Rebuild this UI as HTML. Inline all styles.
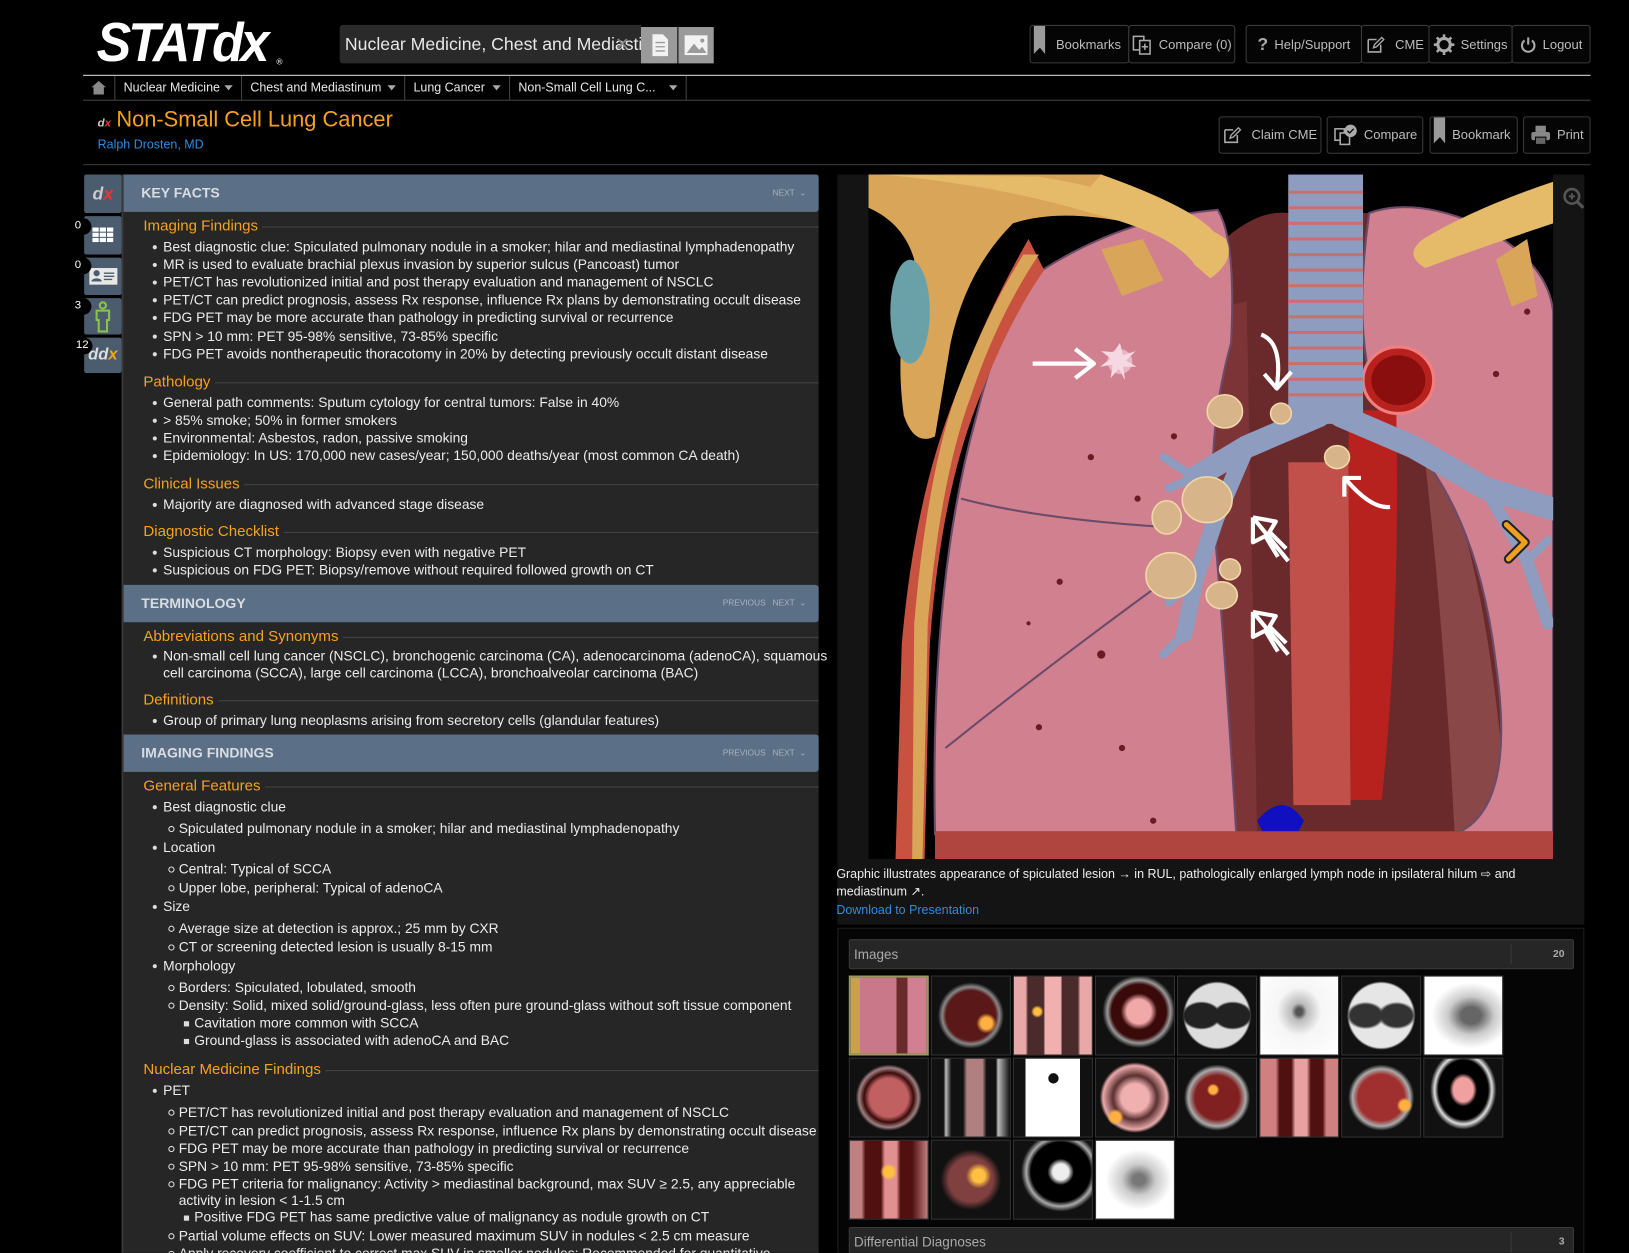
<!DOCTYPE html>
<html><head><meta charset="utf-8"><style>
html,body{margin:0;padding:0;background:#000;width:1629px;height:1253px;overflow:hidden}
#w{position:absolute;left:0;top:0;width:1568px;height:1206px;transform:scale(1.03890);transform-origin:0 0;font-family:"Liberation Sans",Arial,sans-serif;color:#e6e6e6;overflow:hidden}
.a{position:absolute}
.btn{position:absolute;border:1px solid #3a3a3a;border-radius:3px;background:#050505;color:#bdbdbd;font-size:12.5px;display:flex;align-items:center;justify-content:center;gap:6px;box-sizing:border-box}
.bc{position:absolute;top:73px;height:23px;border-right:1px solid #444;color:#e8e8e8;font-size:12px;line-height:23px;padding-left:8px;box-sizing:border-box;font-family:"Liberation Sans Narrow","Liberation Sans",sans-serif}
.bc:after{content:"";position:absolute;right:8px;top:9px;border:4px solid transparent;border-top:5px solid #aaa}
.l{position:absolute;font-size:13.3px;line-height:16px;white-space:nowrap;color:#ececec}
.h{position:absolute;left:120px;width:668px;font-size:14.5px;line-height:18px;color:#f7a21b}
.h span{background:#262626;padding:0 4px 0 18px;position:relative}
.h:before{content:"";position:absolute;left:0;right:0;top:9px;border-top:1px solid #444}
.sh{position:absolute;left:119px;width:669px;height:36px;background:#5b6f86;border-radius:0 3px 3px 0;color:#d9dde2;font-weight:bold;font-size:13.5px;line-height:36px;box-sizing:border-box;padding-left:17px}
.sh i{position:absolute;right:12px;top:0;font-style:normal;font-weight:normal;font-size:8px;color:#a7b4c2}
.b1:before{content:"";position:absolute;left:-10px;top:6px;width:4px;height:4px;border-radius:50%;background:#ddd}
.b2:before{content:"";position:absolute;left:-10px;top:5px;width:4px;height:4px;border-radius:50%;border:1px solid #ddd}
.b3:before{content:"";position:absolute;left:-10px;top:6px;width:5px;height:5px;background:#ddd}
.side{position:absolute;left:81px;width:36px;background:#4b5c6e;border-radius:2px}
.num{position:absolute;left:72px;width:16px;height:16px;border-radius:8px;background:#000;color:#fff;font-size:11px;line-height:14px}
.th{position:absolute;width:77px;height:77px;border:1px solid #333;box-sizing:border-box}
</style></head><body><div id="w">

<div class="a" style="left:93px;top:12px;font-size:50px;font-weight:bold;font-style:italic;color:#fff;letter-spacing:-3px;font-family:'Liberation Sans',sans-serif;transform:scaleY(1.05)">STATd<span style="letter-spacing:0">x</span></div>
<div class="a" style="left:266px;top:55px;font-size:8px;color:#fff">®</div>

<div class="a" style="left:327px;top:24px;width:290px;height:37px;background:#2a2a2a;border-radius:3px 0 0 3px;font-size:17px;line-height:37px;color:#e8e8e8;padding-left:5px;box-sizing:border-box;overflow:hidden;white-space:nowrap;font-family:'Liberation Sans Narrow','Liberation Sans',sans-serif">Nuclear Medicine, Chest and Mediasti<span style="position:absolute;left:265px;color:#888">✕</span></div>
<div class="a" style="left:617px;top:26px;width:35px;height:35px;background:#9a9a9a"><svg width="35" height="35"><path d="M11 7h10l5 5v16H11z" fill="#f2f2f2"/><path d="M14 15h9M14 19h9M14 23h9" stroke="#999" stroke-width="1.3"/></svg></div>
<div class="a" style="left:653px;top:26px;width:34px;height:35px;background:#9a9a9a"><svg width="34" height="35"><rect x="6" y="8" width="22" height="19" fill="#f2f2f2"/><path d="M8 25l7-9 5 6 3-3 4 6z" fill="#9a9a9a"/><circle cx="23" cy="13" r="2" fill="#9a9a9a"/></svg></div>

<div class="btn" style="left:991px;top:24px;width:96px;height:37px;justify-content:flex-end;padding-right:7px"><svg class="a" style="left:3px;top:0" width="12" height="28"><path d="M0 0h11v27l-5-6-6 6z" fill="#9a9a9a"/></svg>Bookmarks</div>
<div class="btn" style="left:1086px;top:24px;width:103px;height:37px"><svg width="20" height="20"><rect x="2" y="2" width="10" height="13" fill="none" stroke="#aaa" stroke-width="1.5"/><rect x="8" y="6" width="10" height="13" fill="#050505" stroke="#aaa" stroke-width="1.5"/><path d="M10 12h6M13 9v6" stroke="#aaa" stroke-width="1.5"/></svg>Compare (0)</div>
<div class="btn" style="left:1199px;top:24px;width:112px;height:37px"><b style="font-size:17px;color:#aaa">?</b>Help/Support</div>
<div class="btn" style="left:1310px;top:24px;width:66px;height:37px"><svg width="18" height="18"><path d="M2 4h8M2 4v12h12V9" fill="none" stroke="#aaa" stroke-width="1.5"/><path d="M7 12l1-3 7-7 2 2-7 7z" fill="none" stroke="#aaa" stroke-width="1.3"/></svg>&nbsp;CME</div>
<div class="btn" style="left:1375px;top:24px;width:81px;height:37px"><svg width="20" height="20"><circle cx="10" cy="10" r="6" fill="none" stroke="#aaa" stroke-width="3"/><path d="M10 0v5M10 15v5M0 10h5M15 10h5M3 3l3 3M14 14l3 3M17 3l-3 3M3 17l3-3" stroke="#aaa" stroke-width="2.5"/></svg>Settings</div>
<div class="btn" style="left:1455px;top:24px;width:76px;height:37px"><svg width="16" height="16"><path d="M4.5 4a6 6 0 1 0 7 0" fill="none" stroke="#aaa" stroke-width="2"/><path d="M8 1v7" stroke="#aaa" stroke-width="2"/></svg>Logout</div>

<div class="a" style="left:80px;top:72px;width:1451px;height:1px;background:#ddd"></div>
<div class="a" style="left:80px;top:73px;width:1451px;height:23px;border-bottom:1px solid #444"></div>
<div class="a" style="left:80px;top:73px;width:31px;height:23px;border-right:1px solid #444;box-sizing:border-box"><svg width="30" height="23"><path d="M8 11l7-6 7 6h-2v7h-10v-7z" fill="#888"/></svg></div>
<div class="bc" style="left:111px;width:122px">Nuclear Medicine</div>
<div class="bc" style="left:233px;width:157px">Chest and Mediastinum</div>
<div class="bc" style="left:390px;width:101px">Lung Cancer</div>
<div class="bc" style="left:491px;width:170px">Non-Small Cell Lung C...</div>

<div class="a" style="left:94px;top:113px;font-size:11px;font-style:italic;font-weight:bold;color:#ccc">d<span style="color:#e33">x</span></div>
<div class="a" style="left:112px;top:104px;font-size:21px;color:#f7a21b;font-family:'Liberation Sans Narrow','Liberation Sans',sans-serif">Non-Small Cell Lung Cancer</div>
<div class="a" style="left:94px;top:132px;font-size:12px;color:#2f8be0">Ralph Drosten, MD</div>

<div class="btn" style="left:1173px;top:112px;width:99px;height:36px"><svg width="18" height="18"><path d="M2 4h8M2 4v12h12V9" fill="none" stroke="#aaa" stroke-width="1.5"/><path d="M7 12l1-3 7-7 2 2-7 7z" fill="none" stroke="#aaa" stroke-width="1.3"/></svg>&nbsp;Claim CME</div>
<div class="btn" style="left:1277px;top:112px;width:93px;height:36px"><svg width="24" height="22"><rect x="2" y="5" width="9" height="11" fill="none" stroke="#aaa" stroke-width="1.5"/><rect x="7" y="9" width="9" height="11" fill="#050505" stroke="#aaa" stroke-width="1.5"/><circle cx="17" cy="7" r="6" fill="#aaa"/><path d="M14 7l2 2 4-4" stroke="#050505" stroke-width="1.3" fill="none"/></svg>Compare</div>
<div class="btn" style="left:1376px;top:112px;width:85px;height:36px;justify-content:flex-end;padding-right:6px"><svg class="a" style="left:3px;top:0" width="12" height="26"><path d="M0 0h11v25l-5-6-6 6z" fill="#9a9a9a"/></svg>Bookmark</div>
<div class="btn" style="left:1466px;top:112px;width:65px;height:36px"><svg width="20" height="20"><rect x="5" y="1" width="10" height="6" fill="#888"/><rect x="1" y="7" width="18" height="8" rx="2" fill="#888"/><rect x="5" y="12" width="10" height="7" fill="#666" stroke="#050505"/></svg>Print</div>
<div class="a" style="left:80px;top:158px;width:1451px;height:1px;background:#3a3a3a"></div>

<div class="a" style="left:117px;top:168px;width:2px;height:1040px;background:#3a3a3a"></div>
<div class="side" style="top:168px;height:37px;font-size:17px;font-style:italic;font-weight:bold;color:#ccc;text-align:center;line-height:37px">d<span style="color:#e33">x</span></div>
<div class="side" style="top:208px;height:37px"><svg width="36" height="37"><g fill="#fff"><rect x="8" y="11" width="6" height="4"/><rect x="15" y="11" width="6" height="4"/><rect x="22" y="11" width="6" height="4"/><rect x="8" y="16" width="6" height="4"/><rect x="15" y="16" width="6" height="4"/><rect x="22" y="16" width="6" height="4"/><rect x="8" y="21" width="6" height="4"/><rect x="15" y="21" width="6" height="4"/><rect x="22" y="21" width="6" height="4"/></g></svg></div>
<div class="side" style="top:248px;height:36px"><svg width="36" height="36"><rect x="5" y="10" width="27" height="16" fill="#e8e8e8"/><circle cx="12" cy="15" r="3" fill="#4b5c6e"/><path d="M7 23c0-4 10-4 10 0z" fill="#4b5c6e"/><path d="M19 15h10M19 18h10M19 21h8" stroke="#4b5c6e" stroke-width="1.3"/></svg></div>
<div class="side" style="top:287px;height:35px"><svg width="36" height="35"><circle cx="18" cy="7" r="3" fill="none" stroke="#8bc34a" stroke-width="2"/><path d="M12 12h12v9h-2v11h-8V21h-2z" fill="none" stroke="#8bc34a" stroke-width="2"/></svg></div>
<div class="side" style="top:325px;height:34px;font-size:16px;font-style:italic;font-weight:bold;color:#ddd;text-align:center;line-height:34px">dd<span style="color:#f7a21b">x</span></div>
<div class="num" style="top:210px">0</div><div class="num" style="top:248px">0</div><div class="num" style="top:287px">3</div><div class="num" style="top:325px;left:73px">12</div>

<div class="a" style="left:119px;top:168px;width:669px;height:1040px;background:#262626"></div>
<div class="sh" style="top:168px">KEY FACTS<i>NEXT &nbsp;⌄</i></div>
<div class="h" style="top:209px"><span>Imaging Findings</span></div>
<div class="l b1" style="left:157px;top:230px">Best diagnostic clue: Spiculated pulmonary nodule in a smoker; hilar and mediastinal lymphadenopathy</div>
<div class="l b1" style="left:157px;top:247px">MR is used to evaluate brachial plexus invasion by superior sulcus (Pancoast) tumor</div>
<div class="l b1" style="left:157px;top:264px">PET/CT has revolutionized initial and post therapy evaluation and management of NSCLC</div>
<div class="l b1" style="left:157px;top:281px">PET/CT can predict prognosis, assess Rx response, influence Rx plans by demonstrating occult disease</div>
<div class="l b1" style="left:157px;top:298px">FDG PET may be more accurate than pathology in predicting survival or recurrence</div>
<div class="l b1" style="left:157px;top:316px">SPN &gt; 10 mm: PET 95-98% sensitive, 73-85% specific</div>
<div class="l b1" style="left:157px;top:333px">FDG PET avoids nontherapeutic thoracotomy in 20% by detecting previously occult distant disease</div>
<div class="h" style="top:359px"><span>Pathology</span></div>
<div class="l b1" style="left:157px;top:380px">General path comments: Sputum cytology for central tumors: False in 40%</div>
<div class="l b1" style="left:157px;top:397px">&gt; 85% smoke; 50% in former smokers</div>
<div class="l b1" style="left:157px;top:414px">Environmental: Asbestos, radon, passive smoking</div>
<div class="l b1" style="left:157px;top:431px">Epidemiology: In US: 170,000 new cases/year; 150,000 deaths/year (most common CA death)</div>
<div class="h" style="top:457px"><span>Clinical Issues</span></div>
<div class="l b1" style="left:157px;top:478px">Majority are diagnosed with advanced stage disease</div>
<div class="h" style="top:503px"><span>Diagnostic Checklist</span></div>
<div class="l b1" style="left:157px;top:524px">Suspicious CT morphology: Biopsy even with negative PET</div>
<div class="l b1" style="left:157px;top:541px">Suspicious on FDG PET: Biopsy/remove without required followed growth on CT</div>

<div class="sh" style="top:563px">TERMINOLOGY<i>PREVIOUS &nbsp; NEXT &nbsp;⌄</i></div>
<div class="h" style="top:604px"><span>Abbreviations and Synonyms</span></div>
<div class="l b1" style="left:157px;top:624px">Non-small cell lung cancer (NSCLC), bronchogenic carcinoma (CA), adenocarcinoma (adenoCA), squamous</div>
<div class="l" style="left:157px;top:640px">cell carcinoma (SCCA), large cell carcinoma (LCCA), bronchoalveolar carcinoma (BAC)</div>
<div class="h" style="top:665px"><span>Definitions</span></div>
<div class="l b1" style="left:157px;top:686px">Group of primary lung neoplasms arising from secretory cells (glandular features)</div>

<div class="sh" style="top:707px">IMAGING FINDINGS<i>PREVIOUS &nbsp; NEXT &nbsp;⌄</i></div>
<div class="h" style="top:748px"><span>General Features</span></div>
<div class="l b1" style="left:157px;top:769px">Best diagnostic clue</div>
<div class="l b2" style="left:172px;top:790px">Spiculated pulmonary nodule in a smoker; hilar and mediastinal lymphadenopathy</div>
<div class="l b1" style="left:157px;top:808px">Location</div>
<div class="l b2" style="left:172px;top:829px">Central: Typical of SCCA</div>
<div class="l b2" style="left:172px;top:847px">Upper lobe, peripheral: Typical of adenoCA</div>
<div class="l b1" style="left:157px;top:865px">Size</div>
<div class="l b2" style="left:172px;top:886px">Average size at detection is approx.; 25 mm by CXR</div>
<div class="l b2" style="left:172px;top:904px">CT or screening detected lesion is usually 8-15 mm</div>
<div class="l b1" style="left:157px;top:922px">Morphology</div>
<div class="l b2" style="left:172px;top:943px">Borders: Spiculated, lobulated, smooth</div>
<div class="l b2" style="left:172px;top:960px">Density: Solid, mixed solid/ground-glass, less often pure ground-glass without soft tissue component</div>
<div class="l b3" style="left:187px;top:977px">Cavitation more common with SCCA</div>
<div class="l b3" style="left:187px;top:994px">Ground-glass is associated with adenoCA and BAC</div>
<div class="h" style="top:1021px"><span>Nuclear Medicine Findings</span></div>
<div class="l b1" style="left:157px;top:1042px">PET</div>
<div class="l b2" style="left:172px;top:1063px">PET/CT has revolutionized initial and post therapy evaluation and management of NSCLC</div>
<div class="l b2" style="left:172px;top:1081px">PET/CT can predict prognosis, assess Rx response, influence Rx plans by demonstrating occult disease</div>
<div class="l b2" style="left:172px;top:1098px">FDG PET may be more accurate than pathology in predicting survival or recurrence</div>
<div class="l b2" style="left:172px;top:1115px">SPN &gt; 10 mm: PET 95-98% sensitive, 73-85% specific</div>
<div class="l b2" style="left:172px;top:1132px">FDG PET criteria for malignancy: Activity &gt; mediastinal background, max SUV ≥ 2.5, any appreciable</div>
<div class="l" style="left:172px;top:1148px">activity in lesion &lt; 1-1.5 cm</div>
<div class="l b3" style="left:187px;top:1164px">Positive FDG PET has same predictive value of malignancy as nodule growth on CT</div>
<div class="l b2" style="left:172px;top:1182px">Partial volume effects on SUV: Lower measured maximum SUV in nodules &lt; 2.5 cm measure</div>
<div class="l b2" style="left:172px;top:1199px">Apply recovery coefficient to correct max SUV in smaller nodules; Recommended for quantitative</div>

<div class="a" style="left:806px;top:168px;width:719px;height:722px;background:#141414"></div>
<svg class="a" style="left:836px;top:168px" width="659" height="659" viewBox="836 168 659 659" preserveAspectRatio="none">
<rect x="836" y="168" width="659" height="659" fill="#000"/>
<path d="M1150 260 Q1200 200 1240 205 L1320 205 Q1380 210 1400 280 L1460 800 L1160 800 Z" fill="#6a2a2c"/>
<path d="M1160 300 L1200 290 L1210 800 L1160 800Z" fill="#7c3437"/>
<path d="M1369 420 Q1430 500 1452 800 L1400 800 Q1390 600 1369 420Z" fill="#8a4748"/>
<path d="M1000 262 Q1080 210 1172 202 Q1190 230 1185 330 Q1160 420 1170 520 Q1180 640 1190 803 L900 803 Q895 560 940 400 Q965 300 1000 262Z" fill="#d0808f" stroke="#6b4a6a" stroke-width="2"/>
<path d="M910 720 Q1010 640 1120 560" fill="none" stroke="#6b4a6a" stroke-width="2"/>
<path d="M925 480 Q1000 500 1132 508" fill="none" stroke="#6b4a6a" stroke-width="2"/>
<path d="M1318 205 Q1360 190 1420 215 Q1490 250 1495 300 L1495 803 L1400 803 Q1460 780 1440 640 Q1420 470 1330 400 Q1300 330 1318 205Z" fill="#d0808f" stroke="#6b4a6a" stroke-width="2"/>
<path d="M990 230 Q950 300 920 380 Q880 480 868 620 L862 827 L890 827 L895 620 Q905 480 940 390 Q970 310 1005 260Z" fill="#c8523f"/>
<path d="M1000 245 Q960 305 935 380 Q905 460 893 600 L888 827 L878 827 L880 600 Q892 460 920 380 Q950 300 985 245Z" fill="#d9a558"/>
<path d="M836 168 L1060 168 Q1120 195 1120 215 L1090 215 Q1020 200 975 215 Q930 260 915 330 L900 420 Q880 430 870 400 Q860 330 880 250 Q870 215 836 200Z" fill="#d9a558"/>
<path d="M848 168 Q960 178 1050 205 Q1130 225 1150 255 L1165 268 Q1190 250 1180 230 Q1120 190 1000 170Z" fill="#e5bb6a"/>
<path d="M1495 175 Q1420 200 1370 230 Q1350 245 1372 258 Q1420 240 1495 215Z" fill="#e5bb6a"/>
<path d="M1440 250 L1470 230 L1480 285 L1455 295Z" fill="#d9a558"/>
<path d="M1060 240 L1100 230 L1120 270 L1080 285Z" fill="#d9a558"/>
<ellipse cx="876" cy="300" rx="19" ry="50" fill="#6aa0a8"/>
<path d="M1240 445 L1298 445 L1300 775 L1245 775Z" fill="#c2504a"/>
<path d="M1298 395 L1344 395 Q1348 600 1330 770 L1300 770Z" fill="#b8221e"/>
<ellipse cx="1346" cy="366" rx="34" ry="32" fill="#b8221e" stroke="#f08080" stroke-width="3"/>
<ellipse cx="1346" cy="366" rx="26" ry="24" fill="#8a0e0e"/>
<path d="M900 800 L1495 800 L1495 827 L900 827Z" fill="#b0453f"/>
<path d="M1210 790 Q1235 760 1255 790 L1250 800 L1215 800Z" fill="#1010c0"/>
<rect x="1240" y="168" width="72" height="240" fill="#8e9cc0"/>
<g stroke="#c87070" stroke-width="3">
<path d="M1240 185h72M1240 200h72M1240 215h72M1240 230h72M1240 245h72M1240 260h72M1240 275h72M1240 290h72M1240 305h72M1240 320h72M1240 335h72M1240 350h72M1240 365h72M1240 380h72"/></g>
<path d="M1060 168 Q1150 200 1170 225 L1150 240 Q1120 215 1040 190Z" fill="#e5bb6a"/>
<g stroke="#8e9cc0" stroke-linecap="round" fill="none">
<path d="M1270 400 L1200 430 L1150 460" stroke-width="22"/>
<path d="M1200 430 L1170 500 L1150 560 L1140 610" stroke-width="16"/>
<path d="M1290 400 L1360 430 L1430 470 L1495 490" stroke-width="22"/>
<path d="M1430 470 L1470 540 L1490 600" stroke-width="12"/>
<path d="M1150 460 L1120 440M1150 460 L1125 470M1150 560 L1120 540M1140 610 L1120 630M1150 560 L1125 580M1470 540 L1490 520" stroke-width="8"/>
</g>
<g fill="#d8b48a" stroke="#f0d8a8" stroke-width="1.5">
<ellipse cx="1179" cy="396" rx="17" ry="16"/><ellipse cx="1233" cy="398" rx="10" ry="10"/><ellipse cx="1162" cy="481" rx="24" ry="22"/><ellipse cx="1123" cy="498" rx="14" ry="16"/><ellipse cx="1127" cy="554" rx="24" ry="22"/><ellipse cx="1184" cy="548" rx="10" ry="10"/><ellipse cx="1176" cy="573" rx="15" ry="13"/><ellipse cx="1287" cy="440" rx="12" ry="11"/>
</g>
<g fill="#f0c0d0" opacity=".8"><circle cx="1078" cy="348" r="12"/></g>
<path d="M1078 330l3 12 12 -4-9 9 10 6-13 0 2 13-6-11-8 9 2-13-12 2 10-8-9-7 12 1z" fill="#f6d8e2"/>
<g fill="none" stroke="#fff" stroke-width="4" stroke-linejoin="round">
<path d="M994 350 H1050 M1035 336 L1053 350 L1035 364"/>
<path d="M1214 322 Q1235 330 1229 372 M1217 360 L1229 374 L1243 358"/>
<path d="M1338 488 Q1320 490 1296 462 M1294 478 L1294 460 L1310 460"/>
<path d="M1206 498 L1240 540 M1206 498 L1206 522 L1218 516 L1230 536 M1206 498 L1228 502 L1222 512 L1238 528"/>
<path d="M1206 589 L1240 630 M1206 589 L1206 613 L1218 607 L1230 627 M1206 589 L1228 593 L1222 603 L1238 619"/>
</g>
<g fill="#6a1a22"><circle cx="1050" cy="440" r="3"/><circle cx="1095" cy="480" r="3"/><circle cx="1020" cy="560" r="3"/><circle cx="1060" cy="630" r="4"/><circle cx="990" cy="600" r="2"/><circle cx="1000" cy="700" r="3"/><circle cx="1080" cy="720" r="3"/><circle cx="1110" cy="790" r="3"/><circle cx="1440" cy="360" r="3"/><circle cx="1470" cy="300" r="3"/><circle cx="1130" cy="420" r="3"/></g>
<path d="M1450 505 L1468 522 L1452 538" fill="none" stroke="#222" stroke-width="9" stroke-linecap="round" stroke-linejoin="round"/>
<path d="M1450 505 L1468 522 L1452 538" fill="none" stroke="#f0a020" stroke-width="5" stroke-linecap="round" stroke-linejoin="round"/>
</svg>
<svg class="a" style="left:1504px;top:180px" width="22" height="22"><circle cx="9" cy="9" r="7" fill="none" stroke="#555" stroke-width="2.5"/><path d="M14 14l6 6" stroke="#555" stroke-width="3"/><path d="M6 9h6M9 6v6" stroke="#555" stroke-width="2"/></svg>

<div class="a" style="left:805px;top:833px;width:700px;font-size:12px;line-height:17.3px;color:#eee">Graphic illustrates appearance of spiculated lesion → in RUL, pathologically enlarged lymph node in ipsilateral hilum ⇨ and mediastinum ↗.<br><span style="color:#2f8be0">Download to Presentation</span></div>

<div class="a" style="left:806px;top:893px;width:719px;height:320px;background:#050505;border:1px solid #1e1e1e;box-sizing:border-box"></div>
<div class="a" style="left:817px;top:904px;width:698px;height:29px;background:#262626;border:1px solid #3a3a3a;border-radius:2px;box-sizing:border-box;font-size:13px;line-height:27px;color:#aaa;padding-left:4px">Images<span style="position:absolute;right:0;top:4px;height:19px;border-left:1px solid #3a3a3a;width:60px;text-align:right;padding-right:8px;box-sizing:border-box;line-height:19px;font-size:10px;font-weight:bold">20</span></div>

<div class="th" style="left:817px;top:939px;border:2px solid #9a9a60;background:linear-gradient(90deg,#c8a050 0 12%,#c87888 12% 60%,#6a2a2c 60% 75%,#d08090 75%)"></div>
<div class="th" style="left:896px;top:939px;background:radial-gradient(circle at 70% 60%,#ffb040 0 8%,transparent 14%),radial-gradient(ellipse at 50% 50%,#5a1818 0 45%,#888 52%,#111 60%)"></div>
<div class="th" style="left:975px;top:939px;background:radial-gradient(circle at 30% 45%,#ffc040 0 5%,transparent 9%),linear-gradient(90deg,#e8a8a8 0 15%,#4a2a2a 18% 38%,#f0b0b0 40% 60%,#4a2a2a 62% 82%,#e8a8a8 85%)"></div>
<div class="th" style="left:1054px;top:939px;background:radial-gradient(ellipse at 55% 45%,#f0a8a8 0 20%,#3a0a0a 30% 45%,#999 52%,#111 60%)"></div>
<div class="th" style="left:1133px;top:939px;background:radial-gradient(ellipse at 30% 50%,#222 0 22%,transparent 26%),radial-gradient(ellipse at 70% 50%,#222 0 22%,transparent 26%),radial-gradient(ellipse,#ddd 0 58%,#111 62%)"></div>
<div class="th" style="left:1212px;top:939px;background:radial-gradient(ellipse at 50% 45%,#555 0 6%,#bbb 14%,#f6f6f6 40%,#fff)"></div>
<div class="th" style="left:1291px;top:939px;background:radial-gradient(ellipse at 30% 50%,#333 0 20%,transparent 25%),radial-gradient(ellipse at 70% 50%,#333 0 20%,transparent 25%),radial-gradient(ellipse,#e6e6e6 0 58%,#111 62%)"></div>
<div class="th" style="left:1370px;top:939px;background:radial-gradient(ellipse at 60% 50%,#666 0 15%,#ccc 35%,#fff 60%)"></div>

<div class="th" style="left:817px;top:1018px;background:radial-gradient(ellipse,#c06060 0 35%,#3a0a0a 45%,#a08080 54%,#111 60%)"></div>
<div class="th" style="left:896px;top:1018px;background:linear-gradient(90deg,#111 0 15%,#bbb 18%,#111 25% 40%,#b08080 45% 65%,#111 70% 82%,#bbb 85%,#111)"></div>
<div class="th" style="left:975px;top:1018px;background:linear-gradient(90deg,#111 0 15%,#fff 15% 85%,#111 85%);"><div style="position:absolute;left:33px;top:14px;width:10px;height:10px;border-radius:50%;background:#111"></div></div>
<div class="th" style="left:1054px;top:1018px;background:radial-gradient(circle at 25% 75%,#ffb040 0 6%,transparent 10%),radial-gradient(ellipse,#f0b0b0 0 25%,#5a3030 40%,#e8a8a8 58%,#111 64%)"></div>
<div class="th" style="left:1133px;top:1018px;background:radial-gradient(circle at 45% 40%,#ffb040 0 6%,transparent 10%),radial-gradient(ellipse,#802020 0 40%,#aaa 52%,#111 60%)"></div>
<div class="th" style="left:1212px;top:1018px;background:linear-gradient(90deg,#d08080 0 20%,#501010 25% 40%,#e8a0a0 45% 60%,#501010 65% 80%,#d08080 85%)"></div>
<div class="th" style="left:1291px;top:1018px;background:radial-gradient(circle at 80% 60%,#ffb040 0 6%,transparent 10%),radial-gradient(ellipse,#a03030 0 42%,#aaa 52%,#111 60%)"></div>
<div class="th" style="left:1370px;top:1018px;background:radial-gradient(ellipse at 50% 40%,#f0a0a0 0 18%,#000 25% 45%,#ddd 52%,#111 60%)"></div>

<div class="th" style="left:817px;top:1097px;background:radial-gradient(circle at 50% 40%,#ffc040 0 8%,transparent 14%),linear-gradient(90deg,#c08080 0 15%,#501010 20% 40%,#e09090 45% 60%,#501010 65% 80%,#c08080)"></div>
<div class="th" style="left:896px;top:1097px;background:radial-gradient(circle at 60% 45%,#ffc040 0 10%,transparent 20%),radial-gradient(ellipse,#804040 0 40%,#111 55%)"></div>
<div class="th" style="left:975px;top:1097px;background:radial-gradient(ellipse at 60% 40%,#eee 0 12%,#000 20% 45%,#aaa 52%,#111 60%)"></div>
<div class="th" style="left:1054px;top:1097px;background:radial-gradient(ellipse at 55% 50%,#777 0 10%,#ccc 28%,#fff 55%)"></div>

<div class="a" style="left:817px;top:1181px;width:698px;height:30px;background:#262626;border:1px solid #3a3a3a;border-radius:2px;box-sizing:border-box;font-size:13px;line-height:27px;color:#aaa;padding-left:4px">Differential Diagnoses<span style="position:absolute;right:0;top:4px;height:19px;border-left:1px solid #3a3a3a;width:60px;text-align:right;padding-right:8px;box-sizing:border-box;line-height:19px;font-size:10px;font-weight:bold">3</span></div>

</div></body></html>
